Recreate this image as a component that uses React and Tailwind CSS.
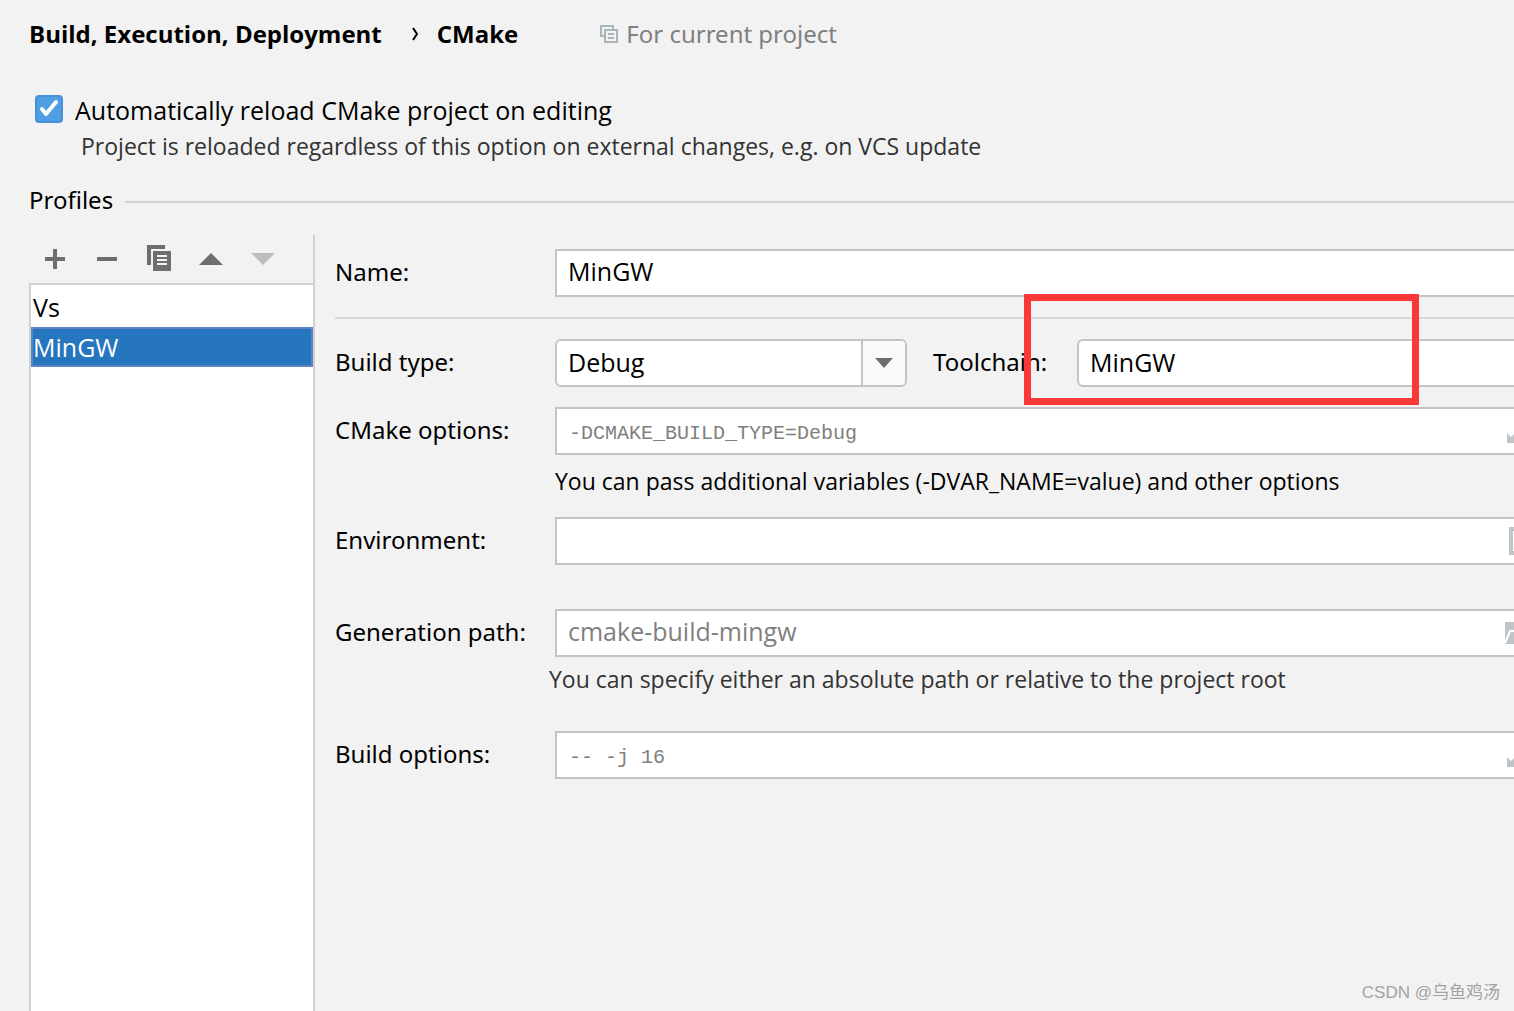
import React, { useState } from 'react';

const profiles = ['Vs', 'MinGW'];

const labelClass = "w-[220px] shrink-0 whitespace-nowrap pb-0.5";
const inputClass = "h-12 w-full border-2 border-[#c4c4c4] bg-white outline-none placeholder:text-[#808080]";

function ToolButton({ label, children, ...props }) {
  return (
    <button aria-label={label} className="flex h-7 w-7 items-center justify-center" {...props}>
      <svg width="28" height="28" viewBox="0 0 28 28" fill="#6e6e6e" shapeRendering="crispEdges">
        {children}
      </svg>
    </button>
  );
}

function ExpandIcon() {
  return (
    <svg width="30" height="24" viewBox="0 0 30 24" fill="#bfc4c9">
      <path d="M0 14l4 4 5-5 3 3-5 5 3 3H0z" />
      <path d="M24 10V0H14l3 3-5 5 3 3 5-5z" />
    </svg>
  );
}

function Field({ id, label, icon, mono, ...props }) {
  return (
    <div className="flex items-center">
      <label htmlFor={id} className={labelClass}>{label}</label>
      <div className="relative flex-1">
        <input
          id={id}
          type="text"
          className={mono
            ? `${inputClass} px-3 pt-1 font-['Liberation_Mono',monospace] text-xl`
            : `${inputClass} px-[11px] pb-1 font-['Open_Sans',sans-serif] text-[25px]`}
          {...props}
        />
        {icon && <span className="absolute inset-y-0 right-[9px] flex items-center">{icon}</span>}
      </div>
    </div>
  );
}

function Combo({ id, options, className }) {
  return (
    <div className={`relative h-12 ${className}`}>
      <select id={id} className="h-full w-full appearance-none rounded-md border-2 border-[#c4c4c4] bg-white pb-0.5 pl-[11px] pr-12 font-['Open_Sans',sans-serif] text-[25px] outline-none">
        {options.map(option => <option key={option}>{option}</option>)}
      </select>
      <span className="pointer-events-none absolute inset-y-0.5 right-0.5 flex w-11 items-center justify-center rounded-r-sm border-l-2 border-[#c4c4c4] bg-[#fafafa]">
        <svg width="18" height="10" viewBox="0 0 18 10" fill="#6e6e6e"><path d="M0 0h18l-9 10z" /></svg>
      </span>
    </div>
  );
}

export default function App() {
  const [autoReload, setAutoReload] = useState(true);
  const [selected, setSelected] = useState('MinGW');

  return (
    <div className="relative flex min-h-screen flex-col overflow-hidden bg-[#f2f2f2] pl-[29px] font-['Noto_Sans','Noto_Sans_CJK_SC',sans-serif] text-2xl leading-9 text-black">
      <header className="flex items-center pt-4">
        <h1 className="flex items-center font-['Open_Sans',sans-serif] font-bold">
          <span>Build, Execution, Deployment</span>
          <svg className="ml-[30px] mr-[18px]" width="7" height="14" viewBox="0 0 7 14" fill="none" stroke="#000" strokeWidth="2">
            <path d="M1 1l4 6-4 6" />
          </svg>
          <span>CMake</span>
        </h1>
        <div className="ml-[82px] flex items-center gap-2 text-[#808080]">
          <svg width="18" height="18" viewBox="0 0 18 18" fill="none" stroke="#aab5bb" strokeWidth="2">
            <path d="M4 11H1V1h12v3M5 5h12v12H5zM8 9h6M8 13h6" />
          </svg>
          <span>For current project</span>
        </div>
      </header>

      <div className="mt-10 flex items-center pl-1.5">
        <span className="relative mb-0.5 h-7 w-7">
          <input
            id="auto-reload"
            type="checkbox"
            checked={autoReload}
            onChange={e => setAutoReload(e.target.checked)}
            className="block h-7 w-7 appearance-none rounded border-2 border-[#4791d8] bg-[#4f9ee3]"
          />
          {autoReload && (
            <svg className="pointer-events-none absolute inset-0" width="28" height="28" viewBox="0 0 28 28" fill="none" stroke="#fff" strokeWidth="4" strokeLinecap="round" strokeLinejoin="round">
              <path d="M7 14l4 5L21 7" />
            </svg>
          )}
        </span>
        <label htmlFor="auto-reload" className="ml-3 font-['Open_Sans',sans-serif] text-[25px]">
          Automatically reload CMake project on editing
        </label>
      </div>
      <p className="pl-13 font-['Open_Sans',sans-serif] text-[23px] text-[#333]">
        Project is reloaded regardless of this option on external changes, e.g. on VCS update
      </p>

      <div className="mt-5 flex items-center gap-3">
        <h2 className="pb-1 leading-8">Profiles</h2>
        <hr className="flex-1 border-t-2 border-[#d1d1d1]" />
      </div>

      <div className="mt-[15px] flex flex-1">
        <aside className="flex w-[286px] shrink-0 flex-col border-r-2 border-[#d1d1d1]">
          <div className="flex h-12 items-center gap-6 pl-3">
            <ToolButton label="Add profile"><path d="M4 12h8V4h4v8h8v4h-8v8h-4v-8H4z" /></ToolButton>
            <ToolButton label="Remove profile"><path d="M4 12h20v4H4z" /></ToolButton>
            <ToolButton label="Copy profile">
              <path d="M2 0h18v4H6v16H2z" />
              <path fillRule="evenodd" d="M8 6h18v20H8zM12 10v2h10v-2zM12 14v2h10v-2zM12 18v2h10v-2z" />
            </ToolButton>
            <ToolButton label="Move up"><path d="M2 20h24L14 8z" shapeRendering="auto" /></ToolButton>
            <ToolButton label="Move down" disabled><path d="M2 8h24L14 20z" fill="#bdbdbd" shapeRendering="auto" /></ToolButton>
          </div>
          <ul className="flex-1 border-l-2 border-t-2 border-[#d1d1d1] bg-white pt-0.5 font-['Open_Sans',sans-serif] text-[25px]">
            {profiles.map(name => (
              <li key={name}>
                <button
                  onClick={() => setSelected(name)}
                  className={name === selected
                    ? "block h-10 w-full border-2 border-[#5f82c4] bg-[#2675bf] text-left text-white"
                    : "block h-10 w-full border-2 border-transparent text-left"}
                >
                  {name}
                </button>
              </li>
            ))}
          </ul>
        </aside>

        {/* the form is wider than the window and gets clipped on the right */}
        <form className="-mr-8 flex-1 pl-5 pt-3.5">
          <Field id="name" label="Name:" defaultValue="MinGW" />
          <hr className="my-5 border-t-2 border-[#d9d9d9]" />
          <div className="relative flex items-center">
            <label htmlFor="build-type" className={labelClass}>Build type:</label>
            <Combo id="build-type" options={['Debug', 'Release']} className="w-[352px] shrink-0" />
            <label htmlFor="toolchain" className="w-[170px] shrink-0 pb-0.5 pl-[26px]">Toolchain:</label>
            <Combo id="toolchain" options={['MinGW', 'Visual Studio']} className="-mr-8 flex-1" />
            <div className="pointer-events-none absolute -top-[45px] left-[689px] h-[111px] w-[395px] border-[7px] border-[#fb3838]" />
          </div>
          <div className="mt-5">
            <Field id="cmake-options" label="CMake options:" placeholder="-DCMAKE_BUILD_TYPE=Debug" mono icon={<ExpandIcon />} />
            <p className="mt-2 pl-[220px] font-['Open_Sans',sans-serif] text-[23px]">
              You can pass additional variables (-DVAR_NAME=value) and other options
            </p>
          </div>
          <div className="mt-[18px]">
            <Field
              id="environment"
              label="Environment:"
              icon={
                <svg width="28" height="28" viewBox="0 0 28 28" fill="none" stroke="#bfc4c9" strokeWidth="4">
                  <path d="M2 2h24v24H2z" />
                </svg>
              }
            />
          </div>
          <div className="mt-11">
            <Field
              id="generation-path"
              label="Generation path:"
              placeholder="cmake-build-mingw"
              icon={
                <svg width="32" height="22" viewBox="0 0 32 22" fill="none">
                  <path d="M0 0h13l4 4h11v5h4l-5 13H0z" fill="#bfc4c9" />
                  <path d="M0 21l5-12h27" stroke="#fff" strokeWidth="2" />
                </svg>
              }
            />
            <p className="mt-1 pl-[214px] font-['Open_Sans',sans-serif] text-[23px] text-[#333]">
              You can specify either an absolute path or relative to the project root
            </p>
          </div>
          <div className="mt-[34px]">
            <Field id="build-options" label="Build options:" placeholder="-- -j 16" mono icon={<ExpandIcon />} />
          </div>
        </form>
      </div>

      <span className="absolute bottom-1 right-3.5 font-['Liberation_Sans','Noto_Sans_CJK_SC',sans-serif] text-[17px] leading-7 text-[#a3a3a3]">
        CSDN @乌鱼鸡汤
      </span>
    </div>
  );
}
